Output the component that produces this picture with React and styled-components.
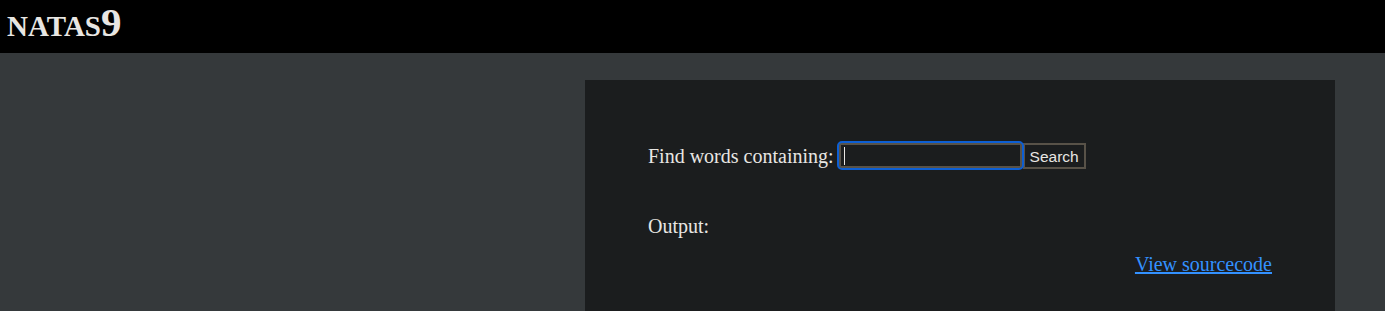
import React from "react";
import styled, { createGlobalStyle } from "styled-components";

const Global = createGlobalStyle`
  html, body { margin: 0; padding: 0; }
  body {
    background: rgb(53, 57, 59);
    color: #e8e6e3;
    font-family: "Liberation Serif", "Times New Roman", serif;
    font-size: 20px;
  }
`;

const Header = styled.h1`
  margin: 0;
  height: 53px;
  box-sizing: border-box;
  padding: 2px 7px 0;
  background: #000;
  color: #e8e6e3;
  font-size: 41px;
  font-weight: bold;
  font-variant: small-caps;
  line-height: 40px;
`;

const Panel = styled.div`
  width: 750px;
  box-sizing: border-box;
  margin: 27px 50px 0 auto;
  min-height: 260px;
  padding: 61px 63px 30px;
  background: rgb(27, 29, 30);
  line-height: 23px;
`;

const SearchForm = styled.form`
  display: flex;
  align-items: center;
  height: 29px;
  margin: 0;
`;

const Label = styled.span`
  margin-right: 5px;
  padding-top: 2px;
`;

const Field = styled.span`
  position: relative;
  display: inline-flex;
  border-radius: 3px;
  outline: 2px solid #0d5fd4;
  &::after {
    content: "";
    position: absolute;
    left: 5px;
    top: 4px;
    width: 1px;
    height: 18px;
    background: #e8e6e3;
  }
`;

const Input = styled.input`
  box-sizing: border-box;
  width: 183px;
  height: 25px;
  margin: 0;
  padding: 1px 2px;
  border: 2px solid rgb(88, 82, 72);
  background: rgb(27, 29, 30);
  color: #e8e6e3;
  outline: none;
  font-family: "Liberation Sans", Arial, sans-serif;
  font-size: 15px;
`;

const Button = styled.button`
  box-sizing: border-box;
  height: 26px;
  margin: 1px 0 0 1px;
  padding: 0 5px;
  border: 2px solid rgb(88, 82, 72);
  background: rgb(27, 29, 30);
  color: #e8e6e3;
  font-family: "Liberation Sans", Arial, sans-serif;
  font-size: 15.5px;
  line-height: 19px;
`;

const Output = styled.div`
  margin-top: 45px;
`;

const ViewSource = styled.div`
  margin-top: 15px;
  text-align: right;
`;

const Link = styled.a`
  color: rgb(51, 145, 255);
  text-decoration: underline;
`;

export default function App() {
  return (
    <>
      <Global />
      <Header>natas9</Header>
      <Panel>
        <SearchForm onSubmit={(e) => e.preventDefault()}>
          <Label>Find words containing:</Label>
          <Field>
            <Input name="needle" />
          </Field>
          <Button type="submit">Search</Button>
        </SearchForm>
        <Output>Output:</Output>
        <ViewSource>
          <Link href="#">View sourcecode</Link>
        </ViewSource>
      </Panel>
    </>
  );
}
